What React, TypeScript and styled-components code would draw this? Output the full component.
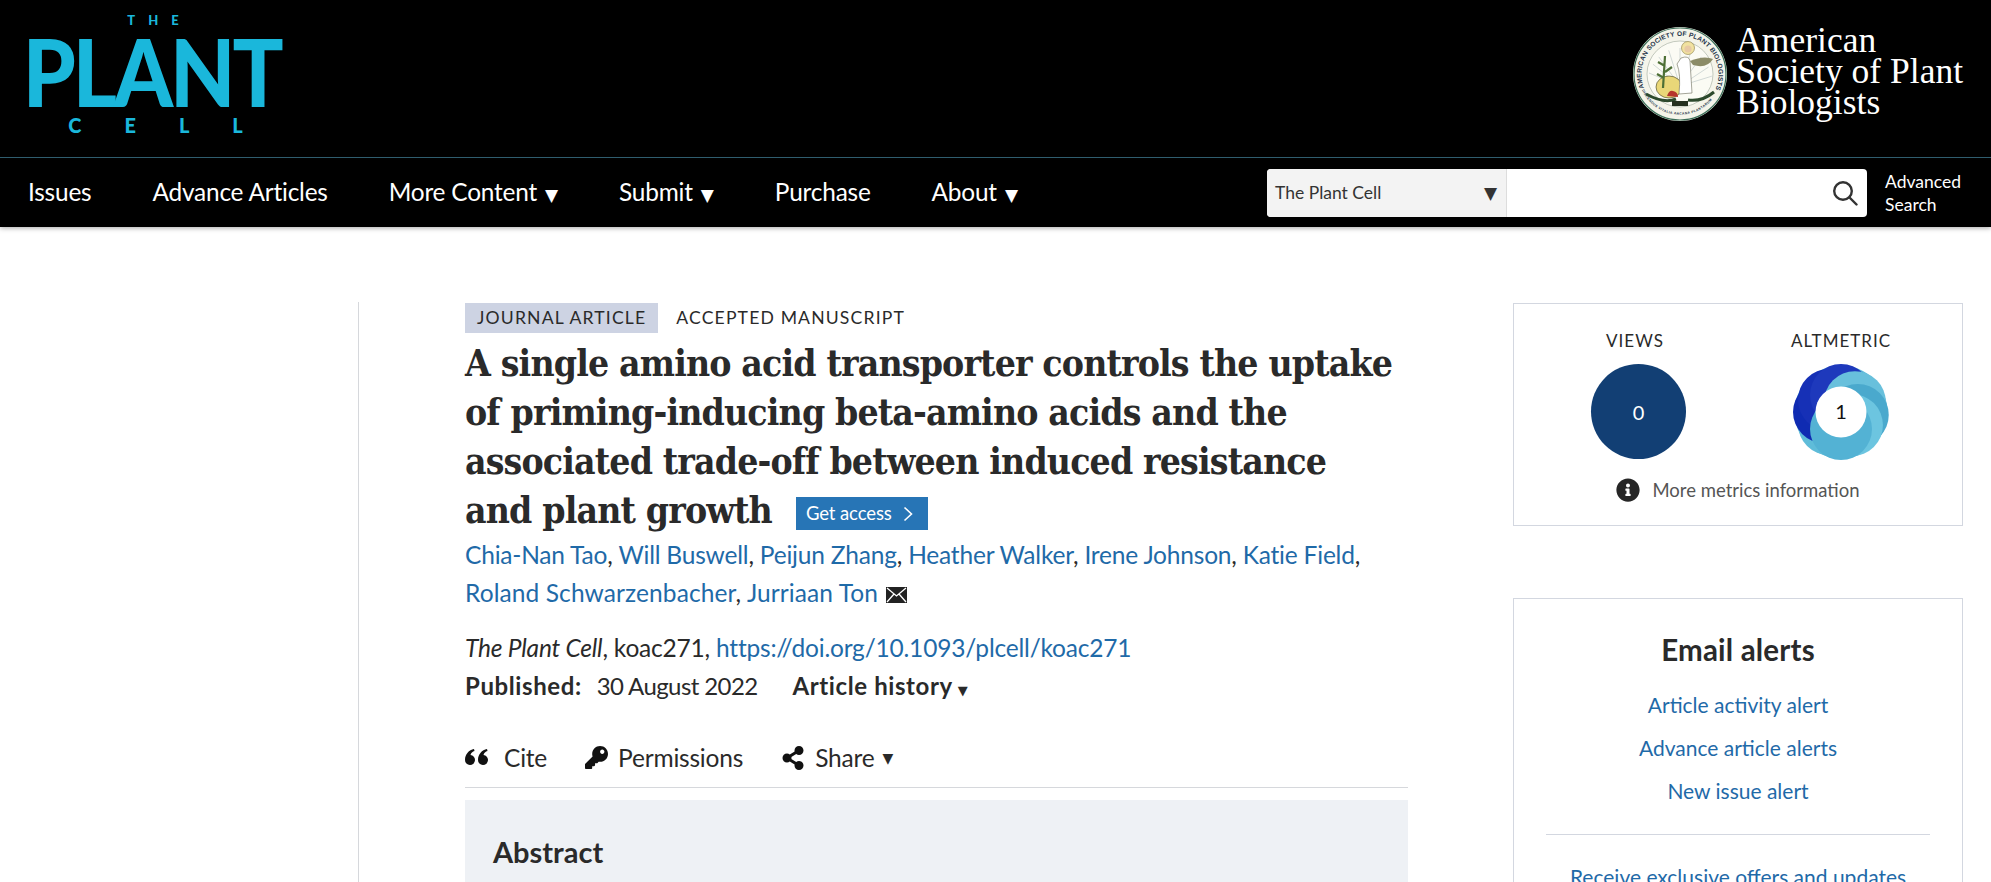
import styled, { createGlobalStyle } from "styled-components";
import { FaShareAlt, FaKey, FaInfoCircle } from "react-icons/fa";

const sans = `"Lato", "Noto Sans", sans-serif`;
const linkBlue = "#1f6aa8";
const ink = "#2a2a2a";

const Global = createGlobalStyle`
    html, body {
        margin: 0;
        height: 882px;
        overflow: hidden;
        background: #fff;
    }
    * { box-sizing: border-box; }
`;

const Page = styled.div`
    font-family: ${sans};
    color: ${ink};
`;

const Masthead = styled.header`
    background: #000;
    box-shadow: 0 1px 5px rgba(0, 0, 0, 0.35);
`;

const BrandBar = styled.div`
    height: 158px;
    display: flex;
    justify-content: space-between;
    padding: 15px 28px 0 28px;
    border-bottom: 1px solid #2f5d6e;
`;

const PlantLogo = styled.div`
    width: 255px;
    display: flex;
    flex-direction: column;
    align-items: center;
    color: #1ab7db;
    font-family: "Lato", sans-serif;
    font-weight: 900;
`;

const LogoSmall = styled.span<{ $size: number; $spacing: number; $shift: number }>`
    font-size: ${p => p.$size}px;
    line-height: ${p => (p.$size > 15 ? 15 : 10)}px;
    letter-spacing: ${p => p.$spacing}px;
    margin-right: ${p => p.$shift}px;
`;

const LogoBig = styled.span`
    font-size: 93px;
    line-height: 67px;
    letter-spacing: -3.4px;
    margin: 13px 0;
    transform: translateX(-4px) scaleX(0.91);
`;

const SocietyLogo = styled.div`
    display: flex;
    align-items: center;
    gap: 9px;
    height: 118px;
`;

const SocietyName = styled.div`
    font-family: "Liberation Serif", serif;
    font-size: 35.5px;
    line-height: 31px;
    color: #fff;
    margin-top: -5px;
`;

const NavBar = styled.nav`
    height: 69px;
    display: flex;
    align-items: center;
    padding: 0 24px 0 28px;
`;

const NavList = styled.div`
    display: flex;
    gap: 61px;
`;

const NavItem = styled.a`
    color: #fff;
    font-size: 24.4px;
    letter-spacing: -0.2px;
    white-space: nowrap;
    margin-top: -2px;
`;

const Caret = styled.span<{ $size?: number; $gap?: number }>`
    font-family: "DejaVu Sans", sans-serif;
    font-size: ${p => p.$size ?? 17}px;
    margin-left: ${p => p.$gap ?? 8}px;
    font-weight: 400;
    letter-spacing: 0;
`;

const SearchArea = styled.div`
    margin-left: auto;
    display: flex;
    align-items: center;
    gap: 18px;
`;

const SearchBox = styled.div`
    width: 600px;
    height: 48px;
    background: #fff;
    border-radius: 4px;
    overflow: hidden;
    display: flex;
    align-items: center;
`;

const ScopeSelect = styled.div`
    width: 240px;
    height: 100%;
    background: #f3f3f3;
    border-right: 1px solid #ddd;
    display: flex;
    align-items: center;
    justify-content: space-between;
    padding: 0 9px 0 8px;
    font-size: 17.5px;
    color: #333;
`;

const SearchIcon = styled.svg`
    margin-left: auto;
    margin-right: 9px;
`;

const AdvancedLink = styled.a`
    color: #fff;
    font-size: 17.5px;
    line-height: 23px;
    width: 82px;
`;

const Content = styled.main`
    display: grid;
    grid-template-columns: 358px 1fr 450px;
    padding: 75px 28px 0 0;
`;

const Rail = styled.div`
    border-right: 1px solid #d6d8dc;
    margin-right: -1px;
    height: 700px;
`;

const Article = styled.article`
    margin-left: 107px;
    width: 943px;
    padding-top: 1px;
`;

const TagRow = styled.div`
    display: flex;
    align-items: center;
    gap: 18px;
`;

const Tag = styled.span<{ $filled?: boolean }>`
    height: 30px;
    line-height: 30px;
    padding: ${p => (p.$filled ? "0 12px" : "0")};
    background: ${p => (p.$filled ? "#cdd3e3" : "transparent")};
    font-size: 17.6px;
    letter-spacing: 1.15px;
    white-space: nowrap;
`;

const Title = styled.h1`
    margin: 6px 0 0;
    max-width: 932px;
    font-family: "DejaVu Serif Condensed", "DejaVu Serif", serif;
    font-stretch: condensed;
    font-weight: 700;
    font-size: 37px;
    letter-spacing: -0.85px;
    line-height: 49px;
    color: ${ink};
`;

const AccessButton = styled.a`
    display: inline-flex;
    align-items: center;
    height: 33px;
    width: 132px;
    margin-left: 24px;
    padding-left: 10px;
    gap: 11px;
    background: #2775b6;
    color: #fff;
    font-family: ${sans};
    font-weight: 400;
    font-size: 18.5px;
    letter-spacing: -0.1px;
    vertical-align: 3px;
`;

const Authors = styled.div`
    margin-top: 1px;
    font-size: 24.5px;
    line-height: 38px;
    letter-spacing: -0.2px;
`;

const AuthorLine = styled.div<{ $spacing?: number }>`
    letter-spacing: ${p => p.$spacing ?? -0.2}px;
`;

const Link = styled.a`
    color: ${linkBlue};
`;

const MailIcon = styled.svg`
    margin-left: 8px;
    vertical-align: -1px;
`;

const Citation = styled.div`
    margin-top: 17px;
    font-size: 24.5px;
    line-height: 38px;
    letter-spacing: -0.2px;
`;

const MetaRow = styled.div`
    display: flex;
    align-items: baseline;
    font-size: 24px;
    line-height: 38px;
    letter-spacing: -0.6px;
`;

const Strong = styled.strong<{ $before?: number; $after?: number }>`
    font-weight: 700;
    letter-spacing: 0.6px;
    margin-left: ${p => p.$before ?? 0}px;
    margin-right: ${p => p.$after ?? 0}px;
`;

const Toolbar = styled.div`
    margin-top: 28px;
    height: 50px;
    padding-bottom: 10px;
    display: flex;
    align-items: center;
    gap: 38px;
    border-bottom: 1px solid #d6d8dc;
    font-size: 24.5px;
    letter-spacing: -0.2px;
`;

const ToolItem = styled.div<{ $gap: number }>`
    display: flex;
    align-items: center;
    gap: ${p => p.$gap}px;
`;

const AbstractPanel = styled.section`
    margin-top: 12px;
    height: 300px;
    background: #eef1f5;
    padding: 34px 28px;
`;

const AbstractTitle = styled.h2`
    margin: 0;
    font-size: 29px;
    line-height: 36px;
    font-weight: 700;
`;

const Sidebar = styled.aside`
    padding-top: 1px;
    display: flex;
    flex-direction: column;
    gap: 72px;
`;

const Card = styled.div`
    border: 1px solid #d3d7e0;
    padding: 26px 32px 0;
`;

const MetricsRow = styled.div`
    display: grid;
    grid-template-columns: 1fr 1fr;
    justify-items: center;
    margin: 0 -14px;
`;

const Metric = styled.div`
    display: flex;
    flex-direction: column;
    align-items: center;
    gap: 12px;
`;

const MetricLabel = styled.span`
    font-size: 17px;
    line-height: 22px;
    letter-spacing: 1px;
`;

const ViewsBadge = styled.div`
    width: 95px;
    height: 95px;
    margin-left: 7px;
    border-radius: 50%;
    background: #123f74;
    color: #fff;
    font-size: 20px;
    display: flex;
    align-items: center;
    justify-content: center;
`;

const MetricsInfo = styled.div`
    margin: 17px 0 22px;
    display: flex;
    justify-content: center;
    align-items: center;
    gap: 12px;
    font-size: 18.5px;
    line-height: 26px;
    color: #555;
`;

const AlertsTitle = styled.h3`
    margin: 6px 0 14px;
    text-align: center;
    font-size: 29.5px;
    line-height: 38px;
    letter-spacing: 0.2px;
    font-weight: 700;
`;

const AlertLink = styled.a`
    display: block;
    text-align: center;
    font-size: 21px;
    line-height: 43px;
    color: ${linkBlue};
`;

const Divider = styled.hr`
    margin: 22px 0 20px;
    border: 0;
    border-top: 1px solid #d3d7e0;
`;

const petals = [
    { a: 135, c: "#5fbcd9" },
    { a: 180, c: "#0f2bb2" },
    { a: 225, c: "#1630b6" },
    { a: 270, c: "#1e39bc" },
    { a: 325, c: "#68c0dc" },
    { a: 10, c: "#4aa9cd" },
    { a: 50, c: "#6cc5e0" },
    { a: 90, c: "#53b2d4" },
];

function AltmetricDonut() {
    return (
        <svg width="96" height="96" viewBox="-48 -48 96 96">
            <circle r="46.5" fill="#5fbcd9" />
            {petals.map(p => (
                <circle
                    key={p.a}
                    cx={17 * Math.cos((p.a * Math.PI) / 180)}
                    cy={17 * Math.sin((p.a * Math.PI) / 180)}
                    r="31"
                    fill={p.c}
                />
            ))}
            <circle cx="0" cy="0" r="25.5" fill="#fff" />
            <text x="0" y="7" textAnchor="middle" fontFamily="Lato, sans-serif" fontSize="20" fill="#111">1</text>
        </svg>
    );
}

const rays = [200, 215, 230, 250, 270, 290, 310, 330, 345];

function Seal() {
    return (
        <svg width="94" height="94" viewBox="-47 -47 94 94">
            <circle r="47" fill="#f4f4ea" />
            <circle r="46" fill="none" stroke="#3b6e58" strokeWidth="1.2" />
            <circle r="33" fill="#fbfbf4" stroke="#8e9a8c" strokeWidth="0.5" />
            <path id="sealArc" d="M -36 14 A 38.500 38.500 0 1 1 36 14" fill="none" />
            <path id="sealLower" d="M -38 16 A 41.500 41.500 0 0 0 38 16" fill="none" />
            <text fontFamily="Liberation Sans, sans-serif" fontSize="6.6" fontWeight="700" fill="#26344a">
                <textPath href="#sealArc" textLength="150">AMERICAN SOCIETY OF PLANT BIOLOGISTS</textPath>
            </text>
            <text fontFamily="Liberation Sans, sans-serif" fontSize="3.4" fontWeight="700" fill="#26344a">
                <textPath href="#sealLower" textLength="84">DISCENDUS VITALIA ARCANA PLANTARUM</textPath>
            </text>
            {rays.map(r => (
                <line
                    key={r}
                    x1="0"
                    y1="12"
                    x2={33 * Math.cos((r * Math.PI) / 180)}
                    y2={12 + 38 * Math.sin((r * Math.PI) / 180)}
                    stroke="#a9b6b8"
                    strokeWidth="0.5"
                />
            ))}
            <ellipse cx="-11" cy="13" rx="13" ry="11" fill="#e9d778" stroke="#3a3a20" strokeWidth="0.6" />
            <path d="M -17 14 L -15 -18 M -15 -8 L -22 -12 M -15 -2 L -8 -7 M -16 4 L -23 0" stroke="#4d6f35" strokeWidth="2.2" fill="none" />
            <path d="M -13 22 q 2 -6 6 -5 q 5 1 5 6 z" fill="#b5352c" />
            <path d="M 1 -16 q 8 -3 9 3 l 2 32 l -13 1 q 2 -20 -2 -30 z" fill="#fff" stroke="#6a6a58" strokeWidth="0.6" />
            <circle cx="8" cy="-26" r="6.5" fill="#f1e2a0" stroke="#8a7a40" strokeWidth="0.6" />
            <circle cx="8" cy="-25" r="3.6" fill="#e8c9a4" />
            <path d="M 10 -13 q 14 -6 23 -2 q -6 10 -20 6 z" fill="#8c8c68" />
            <path d="M -34 20 Q -16 30 -4 25 M 34 18 Q 22 28 8 26" stroke="#2d4a2d" strokeWidth="3" fill="none" />
            <rect x="-8" y="27" width="16" height="5" fill="#25301f" />
        </svg>
    );
}

export default function App() {
    return (
        <Page>
            <Global />
            <Masthead>
                <BrandBar>
                    <PlantLogo>
                        <LogoSmall $size={13} $spacing={13} $shift={-8}>THE</LogoSmall>
                        <LogoBig>PLANT</LogoBig>
                        <LogoSmall $size={20} $spacing={43} $shift={-43}>CELL</LogoSmall>
                    </PlantLogo>
                    <SocietyLogo>
                        <Seal />
                        <SocietyName>
                            American<br />Society of Plant<br />Biologists
                        </SocietyName>
                    </SocietyLogo>
                </BrandBar>
                <NavBar>
                    <NavList>
                        <NavItem>Issues</NavItem>
                        <NavItem>Advance Articles</NavItem>
                        <NavItem>More Content<Caret>▼</Caret></NavItem>
                        <NavItem>Submit<Caret>▼</Caret></NavItem>
                        <NavItem>Purchase</NavItem>
                        <NavItem>About<Caret>▼</Caret></NavItem>
                    </NavList>
                    <SearchArea>
                        <SearchBox>
                            <ScopeSelect>
                                The Plant Cell
                                <Caret $size={17} $gap={0}>▼</Caret>
                            </ScopeSelect>
                            <SearchIcon width="26" height="26" viewBox="0 0 26 26" fill="none" stroke="#333" strokeWidth="2.4">
                                <circle cx="11" cy="11" r="8.8" />
                                <path d="M17.5 17.5 L24.5 24.5" strokeLinecap="round" />
                            </SearchIcon>
                        </SearchBox>
                        <AdvancedLink>Advanced Search</AdvancedLink>
                    </SearchArea>
                </NavBar>
            </Masthead>

            <Content>
                <Rail />
                <Article>
                    <TagRow>
                        <Tag $filled>JOURNAL ARTICLE</Tag>
                        <Tag>ACCEPTED MANUSCRIPT</Tag>
                    </TagRow>
                    <Title>
                        A single amino acid transporter controls the uptake of priming-inducing beta-amino acids and the associated trade-off between induced resistance and plant growth
                        <AccessButton>
                            Get access
                            <svg width="10" height="16" viewBox="0 0 10 16" fill="none" stroke="#fff" strokeWidth="1.6">
                                <path d="M1.5 1.5 L8.5 8 L1.5 14.5" />
                            </svg>
                        </AccessButton>
                    </Title>
                    <Authors>
                        <AuthorLine>
                            <Link>Chia-Nan Tao</Link>, <Link>Will Buswell</Link>, <Link>Peijun Zhang</Link>, <Link>Heather Walker</Link>, <Link>Irene Johnson</Link>, <Link>Katie Field</Link>,
                        </AuthorLine>
                        <AuthorLine $spacing={0.1}>
                            <Link>Roland Schwarzenbacher</Link>, <Link>Jurriaan Ton</Link>
                            <MailIcon width="21" height="16" viewBox="0 0 21 16">
                                <rect width="21" height="16" fill="#222" />
                                <path d="M1 1 L10.5 9 L20 1 M1 15 L8 7 M20 15 L13 7" stroke="#fff" strokeWidth="1.3" fill="none" />
                            </MailIcon>
                        </AuthorLine>
                    </Authors>
                    <Citation>
                        <em>The Plant Cell</em>, koac271, <Link>https://doi.org/10.1093/plcell/koac271</Link>
                    </Citation>
                    <MetaRow>
                        <Strong $after={15}>Published:</Strong>
                        30 August 2022
                        <Strong $before={35}>Article history</Strong>
                        <Caret $size={13} $gap={5}>▼</Caret>
                    </MetaRow>
                    <Toolbar>
                        <ToolItem $gap={16}>
                            <svg width="23" height="18" viewBox="0 0 23 18" fill="#111">
                                <path d="M9 0 C4 1 0 5 0 11 a5 5 0 1 0 5.5-5 C6 4 7.5 2.5 9.5 2 Z" />
                                <path d="M22 0 C17 1 13 5 13 11 a5 5 0 1 0 5.5-5 C19 4 20.5 2.500 22.500 2 Z" />
                            </svg>
                            Cite
                        </ToolItem>
                        <ToolItem $gap={10}>
                            <FaKey size={23} color="#111" />
                            Permissions
                        </ToolItem>
                        <ToolItem $gap={10}>
                            <FaShareAlt size={24} color="#111" />
                            Share<Caret $size={14} $gap={-2}>▼</Caret>
                        </ToolItem>
                    </Toolbar>
                    <AbstractPanel>
                        <AbstractTitle>Abstract</AbstractTitle>
                    </AbstractPanel>
                </Article>

                <Sidebar>
                    <Card>
                        <MetricsRow>
                            <Metric>
                                <MetricLabel>VIEWS</MetricLabel>
                                <ViewsBadge>0</ViewsBadge>
                            </Metric>
                            <Metric>
                                <MetricLabel>ALTMETRIC</MetricLabel>
                                <AltmetricDonut />
                            </Metric>
                        </MetricsRow>
                        <MetricsInfo>
                            <FaInfoCircle size={24} color="#262626" />
                            More metrics information
                        </MetricsInfo>
                    </Card>
                    <Card>
                        <AlertsTitle>Email alerts</AlertsTitle>
                        <AlertLink>Article activity alert</AlertLink>
                        <AlertLink>Advance article alerts</AlertLink>
                        <AlertLink>New issue alert</AlertLink>
                        <Divider />
                        <AlertLink>Receive exclusive offers and updates</AlertLink>
                    </Card>
                </Sidebar>
            </Content>
        </Page>
    );
}
